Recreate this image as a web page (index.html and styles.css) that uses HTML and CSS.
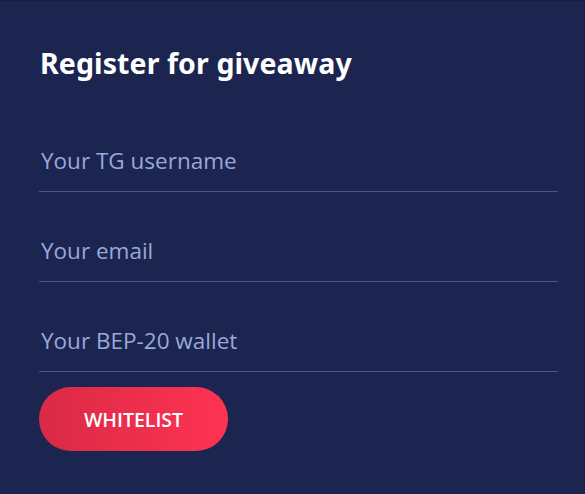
FILE: index.html
```html
<!DOCTYPE html>
<html lang="en">
<head>
  <meta charset="UTF-8" />
  <meta name="viewport" content="width=device-width, initial-scale=1.0"/>
  <title>Register for giveaway</title>
  <link rel="stylesheet" href="styles.css">
</head>
<body>

<!-- Giveaway form -->
<div class="giveaway">
  <h2>Register for giveaway</h2>
  <form class="giveaway-form" onsubmit="return false;">
    <input type="text" placeholder="Your TG username" />
    <input type="email" placeholder="Your email" />
    <input type="text" placeholder="Your BEP-20 wallet" />
    <button type="submit">WHITELIST</button>
  </form>
</div>

</body>
</html>
```

FILE: styles.css
```css
:root {
  --bg: #1b2550;
  --line: #4b5686;
  --placeholder: #9aa8da;
  --white: #fff;
}

* {
  box-sizing: border-box;
}

html, body {
  height: 100%;
}

body {
  margin: 0;
  background-color: var(--bg);
  font-family: 'Open Sans', 'Noto Sans', sans-serif;
  color: var(--white);
}

.giveaway {
  height: 100%;
  padding: 40px 27px 0 39px;
  border-top: 1px solid #16203f;
}

h2 {
  margin: 0 0 0 1px;
  font-family: 'Noto Sans', 'Open Sans', sans-serif;
  font-size: 28.5px;
  font-weight: 700;
  line-height: 44px;
  letter-spacing: 0.1px;
}

.giveaway-form {
  display: flex;
  flex-direction: column;
  margin-top: 17px;
}

.giveaway-form input {
  height: 90px;
  padding: 28px 0 0 2px;
  background: transparent;
  border: none;
  border-bottom: 1px solid var(--line);
  font-family: inherit;
  font-size: 22.5px;
  color: var(--white);
  outline: none;
}

.giveaway-form input::placeholder {
  color: var(--placeholder);
  opacity: 1;
}

.giveaway-form button {
  align-self: flex-start;
  width: 189px;
  height: 64px;
  margin-top: 15px;
  border: none;
  border-radius: 32px;
  background: linear-gradient(90deg, #d92a45, #ff3353);
  color: var(--white);
  font-family: inherit;
  font-size: 19.5px;
  font-weight: 600;
  cursor: pointer;
}
```
